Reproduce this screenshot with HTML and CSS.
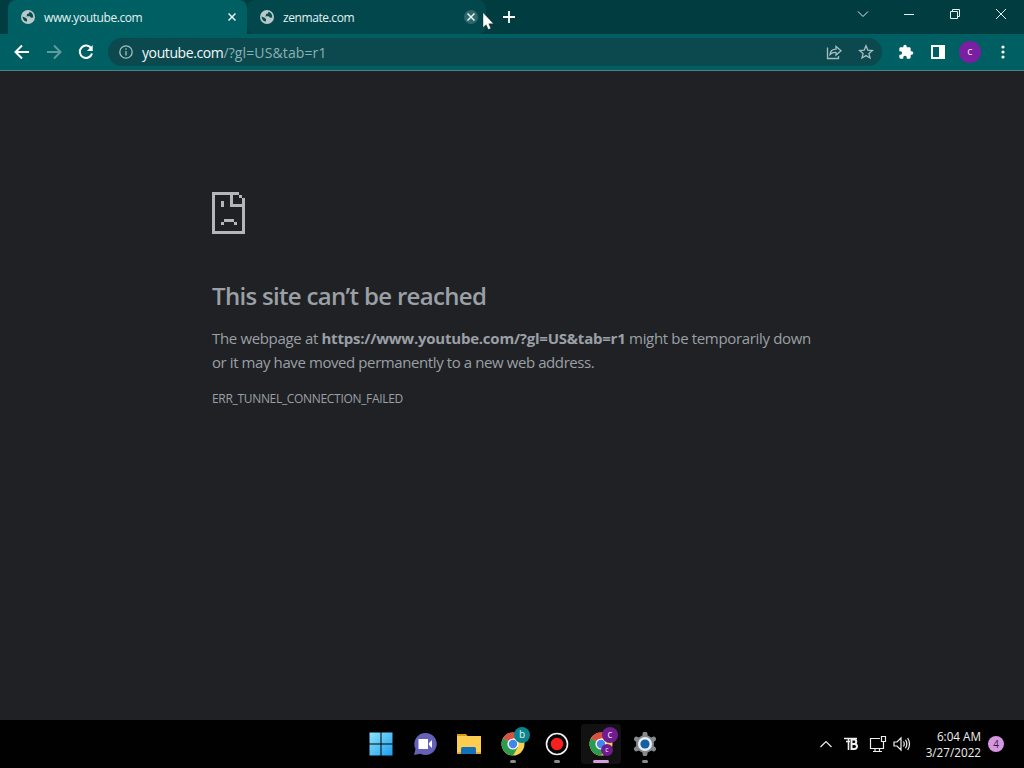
FILE: index.html
```
<!DOCTYPE html>
<html lang="en">
<head>
    <meta charset="UTF-8">
    <meta name="viewport" content="width=device-width, initial-scale=1.0">
    <title>www.youtube.com</title>
    <link rel="stylesheet" href="styles.css">
</head>
<body>

<svg class="defs" aria-hidden="true">
    <symbol id="globe" viewBox="0 0 14 14">
        <circle cx="7" cy="7" r="7" fill="#b9c9ca"/>
        <path d="M1.500 6.500L5 8l1 1.200v2.300C3.500 11.500 1.700 9.500 1.500 6.500zM8.500 1.800L8 3.500 6 4v1.500L4.800 6.300h4l1.200 1.500 2.200-.3c.3-2.800-1.300-4.900-3.700-5.700z" fill="#0a4b50"/>
    </symbol>
    <symbol id="close" viewBox="0 0 8 8">
        <path d="M.5.500l7 7M7.500.500l-7 7" stroke="#e6f4f4" stroke-width="1.500"/>
    </symbol>
    <symbol id="chrome" viewBox="0 0 24 24">
        <circle cx="12" cy="12" r="11.500" fill="#fbd04a"/>
        <path d="M12 12L2 6.300A11.500 11.500 0 0 1 22 6.300H12z" fill="#d94f43"/>
        <path d="M2 6.300A11.500 11.500 0 0 0 12 23.500L17 15 12 12z" fill="#2b9b50"/>
        <circle cx="12" cy="12" r="5.600" fill="#f5f7fa"/>
        <circle cx="12" cy="12" r="4.200" fill="#4286ea"/>
    </symbol>
</svg>

<div class="tabstrip">
    <div class="tab active">
        <svg class="favicon"><use href="#globe"/></svg>
        <span class="tab-title">www.youtube.com</span>
        <span class="tab-close"><svg><use href="#close"/></svg></span>
    </div>
    <div class="tab">
        <svg class="favicon"><use href="#globe"/></svg>
        <span class="tab-title">zenmate.com</span>
        <span class="tab-close hover"><svg><use href="#close"/></svg></span>
    </div>
    <svg class="new-tab" viewBox="0 0 12 12"><path d="M6 0v12M0 6h12" stroke="#fff" stroke-width="1.800"/></svg>
    <div class="window-buttons">
        <svg viewBox="0 0 12 12"><path d="M1 3.500l5 5 5-5" /></svg>
        <svg viewBox="0 0 12 12"><path d="M1 6.500h10" /></svg>
        <svg viewBox="0 0 12 12"><path d="M1.500 3.500h7v7h-7zM3.500 3V1.500h7v7H9" /></svg>
        <svg viewBox="0 0 12 12"><path d="M1 1l10 10M11 1L1 11" /></svg>
    </div>
</div>

<div class="toolbar">
    <svg class="nav" viewBox="0 0 16 16"><path d="M15 8H2M8 1.500L1.500 8 8 14.500"/></svg>
    <svg class="nav disabled" viewBox="0 0 16 16"><path d="M1 8h13M8 1.500L14.500 8 8 14.500"/></svg>
    <svg class="nav" viewBox="0 0 16 16"><path d="M13.300 4.500A6.200 6.200 0 1 0 14 9.500"/><path d="M14.700 1v6H8.900z" class="solid"/></svg>
    <div class="omnibox">
        <svg class="info" viewBox="0 0 14 14"><circle cx="7" cy="7" r="6.200"/><path d="M7 6v4.500M7 3.300v1.500"/></svg>
        <span class="url"><b>youtube.com</b>/?gl=US&amp;tab=r1</span>
        <svg class="share" viewBox="0 0 16 16"><path d="M1.500 3.500v11h11v-2.500M4 10.500c.4-3.600 2.500-5.200 6-5.300V2.500L15 6.800l-5 4.200V8.500C7.500 8.300 5.500 9 4 10.500z"/></svg>
        <svg class="star" viewBox="0 0 16 16"><path d="M8 1.800l1.800 4.300 4.600.4-3.500 3 1.100 4.500-4-2.400L4 14l1.100-4.500-3.500-3 4.600-.4z"/></svg>
    </div>
    <svg class="tool" viewBox="0 0 24 24"><path fill="#fff" d="M20.500 11H19V7c0-1.100-.9-2-2-2h-4V3.500a2.500 2.500 0 0 0-5 0V5H4c-1.100 0-2 .9-2 2v3.800h1.500a2.700 2.700 0 0 1 0 5.400H2V20c0 1.100.9 2 2 2h3.800v-1.500a2.700 2.700 0 0 1 5.400 0V22H17c1.100 0 2-.9 2-2v-4h1.500a2.500 2.500 0 0 0 0-5z"/></svg>
    <svg class="tool" viewBox="0 0 16 16"><path fill="#fff" fill-rule="evenodd" d="M1 1h14v14H1zM3 3v10h6V3z"/></svg>
    <span class="avatar">c</span>
    <svg class="tool" viewBox="0 0 16 16"><g fill="#fff"><circle cx="8" cy="3" r="1.600"/><circle cx="8" cy="8" r="1.600"/><circle cx="8" cy="13" r="1.600"/></g></svg>
</div>

<div class="page">
    <svg class="sad" viewBox="0 0 33 42" shape-rendering="crispEdges">
        <path d="M0 0h27v3H21v9h9V6h3v36H0zM3 3v36h27V15H18V3zM27 3h3v3h-3zM9 9h3v6H9zM12 27h10v3H12zM9 30h3v3H9zM22 30h3v3h-3z" fill="#b4b6b7" fill-rule="evenodd"/>
    </svg>
    <h1>This site can’t be reached</h1>
    <p>The webpage at <b>https://www.youtube.com/?gl=US&amp;tab=r1</b> might be temporarily down<br><span class="line2">or it may have moved permanently to a new web address.</span></p>
    <div class="error-code">ERR_TUNNEL_CONNECTION_FAILED</div>
</div>

<div class="taskbar">
    <div class="apps">
        <div class="app">
            <svg viewBox="0 0 24 24">
                <defs><linearGradient id="win" x2="1" y2="1"><stop offset="0" stop-color="#8ce4fc"/><stop offset="1" stop-color="#1e9ff0"/></linearGradient></defs>
                <path d="M.5.500h11v11H.500zM12.500.500h11v11h-11zM.500 12.500h11v11H.500zM12.500 12.500h11v11h-11z" fill="url(#win)"/>
            </svg>
        </div>
        <div class="app">
            <svg viewBox="0 0 24 24">
                <path d="M12.500 1a11 11 0 1 1-5 20.700L1 23l1.500-6A11 11 0 0 1 12.500 1z" fill="#6561b8"/>
                <path d="M5.500 7h9.500v10H5.500zM16 11l3-3v8l-3-3z" fill="#fff"/>
            </svg>
        </div>
        <div class="app">
            <svg viewBox="0 0 24 24">
                <path d="M0 2h9l2 2.500H0z" fill="#d89b16"/>
                <path d="M0 4h24v18H0z" fill="#fccd50"/>
                <path d="M0 20h24v2H0z" fill="#e5ad2d"/>
                <path d="M4 22v-5.500q0-1.500 1.500-1.500h12q1.500 0 1.500 1.500V22z" fill="#1570ba"/>
            </svg>
        </div>
        <div class="app running">
            <svg viewBox="0 0 24 24"><use href="#chrome"/></svg>
            <span class="badge teal">b</span>
        </div>
        <div class="app running">
            <svg viewBox="0 0 24 24"><circle cx="12" cy="12" r="10.500" fill="#050505" stroke="#f4f4f4" stroke-width="1.600"/><circle cx="12" cy="12" r="6.200" fill="#f5201f"/></svg>
        </div>
        <div class="app running current">
            <svg viewBox="0 0 24 24"><use href="#chrome"/></svg>
            <span class="badge">c</span>
            <span class="badge small">c</span>
        </div>
        <div class="app running">
            <svg viewBox="0 0 24 24">
                <circle cx="12" cy="12" r="9" fill="#85898d"/>
                <path d="M12 2.200v19.600M3.500 7.100l17 9.800M3.500 16.900l17-9.800" stroke="#85898d" stroke-width="5" stroke-linecap="round"/>
                <circle cx="12" cy="12" r="7" fill="#e9eef2"/>
                <circle cx="12" cy="12" r="4.600" fill="#155fa5"/>
            </svg>
        </div>
    </div>
    <div class="tray">
        <svg class="chevron" viewBox="0 0 14 14"><path d="M1.500 10L7 4.500l5.500 5.500"/></svg>
        <svg class="tb" viewBox="0 0 16 16"><path d="M1 2.500h13M3 5.500h4M5.500 3v11" stroke-width="1.600"/><path d="M8.500 3.500v9.500h3a2.500 2.500 0 0 0 0-5h-3 2.500a2.200 2.200 0 0 0 0-4.500z" stroke-width="2"/></svg>
        <svg class="monitor" viewBox="0 0 18 18"><path d="M11 3.500H1.500v10h13V9M4 16.500h9M6 14v2M10.500 14v2M12.500 1.500h4v5h-4zM14.500 6.500V9"/></svg>
        <svg class="speaker" viewBox="0 0 18 16"><path d="M1 6h3l4-4v12l-4-4H1zM10.500 5.500q1.500 2.500 0 5M12.500 3.800q2.600 4.200 0 8.400M14.700 2q3.600 6 0 12"/></svg>
        <div class="clock"><span>6:04 AM</span><span>3/27/2022</span></div>
        <span class="count">4</span>
    </div>
</div>

<svg class="cursor" viewBox="0 0 12 18"><path d="M1 .5v15l3.200-2.700 2 4.700 2.600-1.100-2-4.600H11.500z" fill="#fff" stroke="#222" stroke-width=".4"/></svg>

</body>
</html>
```
FILE: styles.css
```
body {
    margin: 0;
    width: 1024px;
    height: 768px;
    overflow: hidden;
    display: flex;
    flex-direction: column;
    background: #202124;
    font-family: "Open Sans", "Noto Sans", sans-serif;
}
svg {
    display: block;
    flex: none;
}
.defs {
    position: absolute;
    width: 0;
    height: 0;
}

/* tabs */
.tabstrip {
    height: 34px;
    flex: none;
    display: flex;
    align-items: center;
    padding-left: 8px;
    background: #003c40;
}
.tab {
    width: 239px;
    height: 34px;
    box-sizing: border-box;
    padding: 0 8px 0 12px;
    display: flex;
    align-items: center;
    border-radius: 8px;
    background: #02474c;
    color: #e4f2f2;
    font-size: 12px;
    letter-spacing: -0.42px;
}
.tab.active {
    background: #005f62;
    border-radius: 8px 8px 0 0;
}
.favicon {
    width: 14px;
    height: 14px;
    margin: 0 9px 0 1px;
}
.tab-title {
    flex: 1;
    white-space: nowrap;
}
.tab-close {
    width: 14px;
    height: 14px;
    display: flex;
    align-items: center;
    justify-content: center;
    border-radius: 50%;
}
.tab-close svg {
    width: 8px;
    height: 8px;
}
.tab-close.hover {
    background: #30676b;
}
.new-tab {
    width: 12px;
    height: 12px;
    margin-left: 17px;
}
.window-buttons {
    margin-left: auto;
    height: 28px;
    display: flex;
    align-items: center;
    align-self: flex-start;
    gap: 34px;
    padding-right: 17px;
}
.window-buttons svg {
    width: 12px;
    height: 12px;
    fill: none;
    stroke: #e4f0f0;
    stroke-width: 1;
}

/* toolbar */
.toolbar {
    height: 37px;
    flex: none;
    box-sizing: border-box;
    display: flex;
    align-items: center;
    padding: 0 13px 0 14px;
    background: #005f62;
    border-bottom: 1px solid #4b8285;
}
.nav {
    width: 16px;
    height: 16px;
    margin-right: 16px;
    fill: none;
    stroke: #fff;
    stroke-width: 2;
}
.nav.disabled {
    stroke: #5f9c9f;
}
.nav .solid {
    fill: #fff;
    stroke: none;
}
.omnibox {
    width: 774px;
    flex: none;
    height: 28px;
    box-sizing: border-box;
    margin-left: -2px;
    margin-right: 16px;
    padding: 0 8px 0 11px;
    display: flex;
    align-items: center;
    border-radius: 14px;
    background: #0b494f;
}
.omnibox svg {
    fill: none;
    stroke: #a5bfc1;
    stroke-width: 1.3;
}
.info {
    width: 14px;
    height: 14px;
    margin-right: 9px;
}
.url {
    flex: 1;
    font-size: 14px;
    letter-spacing: 0.12px;
    color: #8db0b3;
}
.url b {
    font-weight: normal;
    letter-spacing: -0.4px;
    color: #f0fafa;
}
.share, .star {
    width: 16px;
    height: 16px;
}
.share {
    margin-right: 16px;
}
.tool {
    width: 16px;
    height: 16px;
    margin-right: 16px;
}
.tool:last-child {
    margin-right: 0;
}
.avatar {
    width: 22px;
    height: 22px;
    margin: 0 14px 0 -3px;
    border-radius: 50%;
    background: #7b1fa2;
    color: #f3e4f6;
    font-size: 11px;
    line-height: 20px;
    text-align: center;
}

/* error page */
.page {
    flex: 1;
    padding: 121px 0 0 212px;
    color: #9aa0a6;
}
.sad {
    width: 33px;
    height: 42px;
}
h1 {
    margin: 45px 0 14px;
    font-size: 24px;
    line-height: 33px;
    font-weight: 600;
    letter-spacing: -0.68px;
}
p {
    margin: 0;
    font-size: 15px;
    line-height: 24px;
    letter-spacing: -0.34px;
    white-space: pre;
}
p b {
    letter-spacing: -0.23px;
}
.line2 {
    letter-spacing: -0.41px;
}
.error-code {
    margin-top: 13px;
    font-size: 12px;
    line-height: 24px;
    letter-spacing: -0.32px;
}

/* taskbar */
.taskbar {
    height: 48px;
    flex: none;
    display: flex;
    align-items: center;
    background: #010101;
}
.apps {
    display: flex;
    gap: 4px;
    padding-left: 361px;
}
.app {
    position: relative;
    width: 40px;
    height: 40px;
    display: flex;
    align-items: center;
    justify-content: center;
}
.app svg {
    width: 24px;
    height: 24px;
}
.app.current {
    background: #121212;
    border-radius: 4px;
}
.app.running::after {
    content: "";
    position: absolute;
    bottom: 1px;
    left: 17px;
    width: 6px;
    height: 3px;
    border-radius: 2px;
    background: #8c8c8c;
}
.app.current::after {
    left: 12px;
    width: 16px;
    background: #d79edc;
}
.badge {
    position: absolute;
    top: 3px;
    right: 3px;
    width: 16px;
    height: 16px;
    border-radius: 50%;
    background: #711b91;
    color: #eee;
    font-size: 10px;
    line-height: 15px;
    text-align: center;
}
.badge.teal {
    background: #09858f;
}
.badge.small {
    top: 20px;
    right: 8px;
    width: 12px;
    height: 12px;
    font-size: 7px;
    line-height: 11px;
}
.tray {
    margin-left: auto;
    display: flex;
    align-items: center;
    padding-right: 20px;
}
.tray svg {
    fill: none;
    stroke: #eee;
    stroke-width: 1.2;
}
.chevron {
    width: 14px;
    height: 14px;
    margin-right: 10px;
}
.tb {
    width: 16px;
    height: 16px;
    margin-right: 10px;
}
.monitor {
    width: 18px;
    height: 18px;
    margin-right: 6px;
}
.speaker {
    width: 18px;
    height: 16px;
}
.clock {
    width: 70px;
    margin-right: 7px;
    display: flex;
    flex-direction: column;
    align-items: flex-end;
    color: #eee;
    font-size: 11.7px;
    line-height: 16px;
}
.count {
    width: 16px;
    height: 16px;
    border-radius: 50%;
    background: #d597e0;
    color: #3a1c40;
    font-size: 10px;
    line-height: 16px;
    text-align: center;
}

.cursor {
    position: absolute;
    left: 482px;
    top: 12px;
    width: 12px;
    height: 18px;
}
```
